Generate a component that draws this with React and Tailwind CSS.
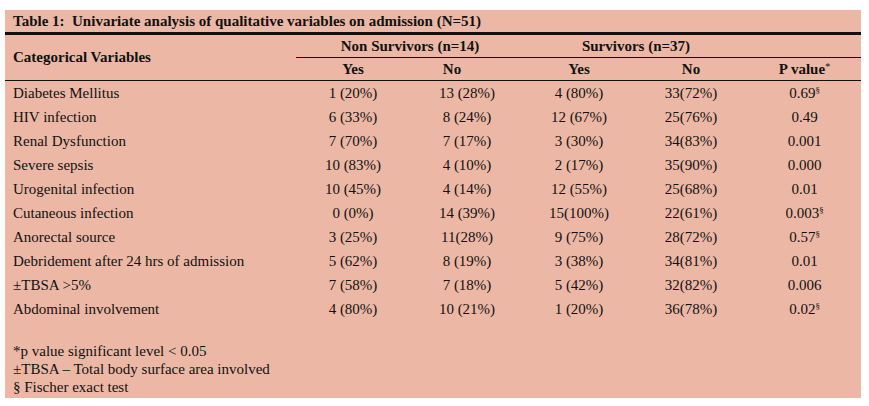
import React from "react";

const rows = [
  ["Diabetes Mellitus", "1 (20%)", "13 (28%)", "4 (80%)", "33(72%)", "0.69", true],
  ["HIV infection", "6 (33%)", "8 (24%)", "12 (67%)", "25(76%)", "0.49", false],
  ["Renal Dysfunction", "7 (70%)", "7 (17%)", "3 (30%)", "34(83%)", "0.001", false],
  ["Severe sepsis", "10 (83%)", "4 (10%)", "2 (17%)", "35(90%)", "0.000", false],
  ["Urogenital infection", "10 (45%)", "4 (14%)", "12 (55%)", "25(68%)", "0.01", false],
  ["Cutaneous infection", "0 (0%)", "14 (39%)", "15(100%)", "22(61%)", "0.003", true],
  ["Anorectal source", "3 (25%)", "11(28%)", "9 (75%)", "28(72%)", "0.57", true],
  ["Debridement after 24 hrs of admission", "5 (62%)", "8 (19%)", "3 (38%)", "34(81%)", "0.01", false],
  ["\u00b1TBSA >5%", "7 (58%)", "7 (18%)", "5 (42%)", "32(82%)", "0.006", false],
  ["Abdominal involvement", "4 (80%)", "10 (21%)", "1 (20%)", "36(78%)", "0.02", true],
];

const cols = "grid grid-cols-[291px_114px_114px_110px_114px_113px]";

export default function App() {
  return (
    <div className="pt-[10px] pl-[5px] bg-white min-h-[406px]">
      <div className="w-[856px] bg-[#ecb8a5] text-[#111] font-['Liberation_Serif',serif] text-[15px]">
        <div className="h-[22px] pl-[8px] font-bold leading-[22px] whitespace-pre">
          {"Table 1:  Univariate analysis of qualitative variables on admission (N=51)"}
        </div>
        <div className="h-[3px] bg-[#111]" />
        <div className={cols + " border-b border-[#111]"}>
          <div className="row-span-2 flex items-center pl-[8px] font-bold">Categorical Variables</div>
          <div className="col-span-2 h-[23px] border-b border-[#111] flex items-center justify-center font-bold">
            Non Survivors (n=14)
          </div>
          <div className="col-span-2 h-[23px] border-b border-[#111] flex items-center justify-center font-bold">
            Survivors (n=37)
          </div>
          <div className="h-[23px] border-b border-[#111]" />
          <div className="h-[22px] flex items-center justify-center font-bold">Yes</div>
          <div className="h-[22px] flex items-center justify-center font-bold pr-[30px]">No</div>
          <div className="h-[22px] flex items-center justify-center font-bold">Yes</div>
          <div className="h-[22px] flex items-center justify-center font-bold">No</div>
          <div className="h-[22px] flex items-center justify-center font-bold">
            P value<span className="text-[10px] relative top-[-3px] font-normal">*</span>
          </div>
        </div>
        <div className="flex flex-col">
          {rows.map((r) => (
            <div key={r[0]} className={cols + " h-[24px] items-center"}>
              <div className="pl-[8px] whitespace-pre">{r[0]}</div>
              <div className="text-center">{r[1]}</div>
              <div className="text-center">{r[2]}</div>
              <div className="text-center">{r[3]}</div>
              <div className="text-center">{r[4]}</div>
              <div className="text-center">
                {r[5]}
                {r[6] && <span className="text-[9px] top-[-5px] relative">§</span>}
              </div>
            </div>
          ))}
        </div>
        <div className="pt-[21px] pb-[2px] pl-[8px] leading-[18px]">
          <div>*p value significant level &lt; 0.05</div>
          <div>±TBSA – Total body surface area involved</div>
          <div>§ Fischer exact test</div>
        </div>
      </div>
    </div>
  );
}
